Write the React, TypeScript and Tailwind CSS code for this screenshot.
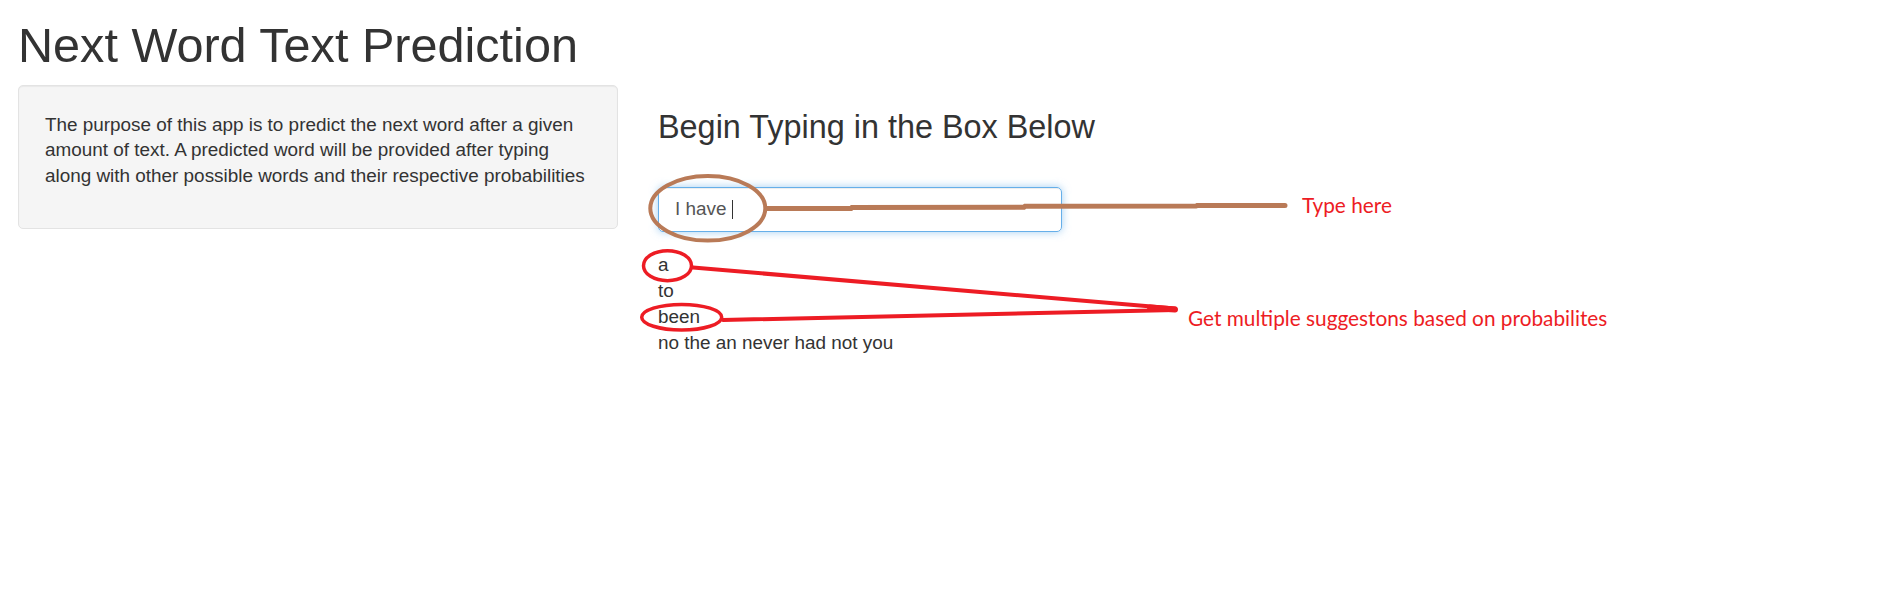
import React from 'react';

const suggestions = ['a', 'to', 'been', 'no the an never had not you'];

// paint-style markup drawn on top of the app screenshot
const Annotations: React.FC = () => {
  return (
    <div className="pointer-events-none absolute left-0 top-0 h-[599px] w-[1879px]">
      <svg width="1879" height="599" className="absolute left-0 top-0">
        <g fill="none" stroke="#b97a57" strokeLinecap="round">
          <ellipse cx="707.8" cy="208.3" rx="57.5" ry="32.3" strokeWidth="4" />
          <path
            d="M767 208.6 L851 208.6 L852 207.4 L1024 207.2 L1025 206.3 L1196 206 L1197 205.6 L1285 205.6"
            strokeWidth="5"
          />
        </g>
        <g fill="none" stroke="#ed1c24" strokeLinecap="round">
          <ellipse cx="667.5" cy="265.7" rx="24" ry="15" strokeWidth="3.5" />
          <ellipse cx="681.7" cy="317.2" rx="40" ry="12.8" strokeWidth="3.5" />
          <path d="M693 267.5 L1175 308.5" strokeWidth="4" />
          <path d="M723 320 L1175 310" strokeWidth="4" />
          <path d="M1150 307.5 L1175 309.5" strokeWidth="6" />
        </g>
      </svg>
      <span className="absolute left-[1302px] top-[195px] whitespace-nowrap font-['Lato',sans-serif] text-[20.8px] leading-none text-[#ed1c24]">
        Type here
      </span>
      <span className="absolute left-[1188px] top-[308px] whitespace-nowrap font-['Lato',sans-serif] text-[20.8px] leading-none text-[#ed1c24]">
        Get multiple suggestons based on probabilites
      </span>
    </div>
  );
};

const App: React.FC = () => {
  return (
    <div className="relative min-h-[599px] w-full overflow-hidden bg-white px-[18px] font-['Liberation_Sans',Arial,sans-serif] text-[#333]">
      <h1 className="pt-[19px] text-[48.6px] font-normal leading-[52.8px]">Next Word Text Prediction</h1>
      <div className="mt-[13px] flex items-start">
        <div className="w-[600px] shrink-0 rounded-[5px] border border-[#e3e3e3] bg-[#f5f5f5] pb-[39px] pl-[26px] pr-[26px] pt-[26px] text-[18.9px] leading-[25.6px] shadow-[inset_0_1px_1px_rgba(0,0,0,0.05)]">
          The purpose of this app is to predict the next word after a given amount of text. A predicted word
          will be provided after typing along with other possible words and their respective probabilities
        </div>
        <div className="ml-[40px] flex flex-col">
          <h3 className="mt-[25.6px] text-[32.4px] font-normal leading-[35.2px]">Begin Typing in the Box Below</h3>
          <div className="mt-[41.5px] flex h-[45px] w-[404px] items-center rounded-[5px] border border-[#66afe9] px-[16px] text-[18.9px] text-[#555] shadow-[inset_0_1px_1px_rgba(0,0,0,0.075),0_0_8px_rgba(102,175,233,0.6)]">
            <span className="whitespace-pre">I have </span>
            <span className="h-[19px] w-px bg-[#333]" />
          </div>
          <div className="mt-[20px] text-[18.9px] leading-[25.9px]">
            {suggestions.map((s) => (
              <div key={s}>{s}</div>
            ))}
          </div>
        </div>
      </div>
      <Annotations />
    </div>
  );
};

export default App;
